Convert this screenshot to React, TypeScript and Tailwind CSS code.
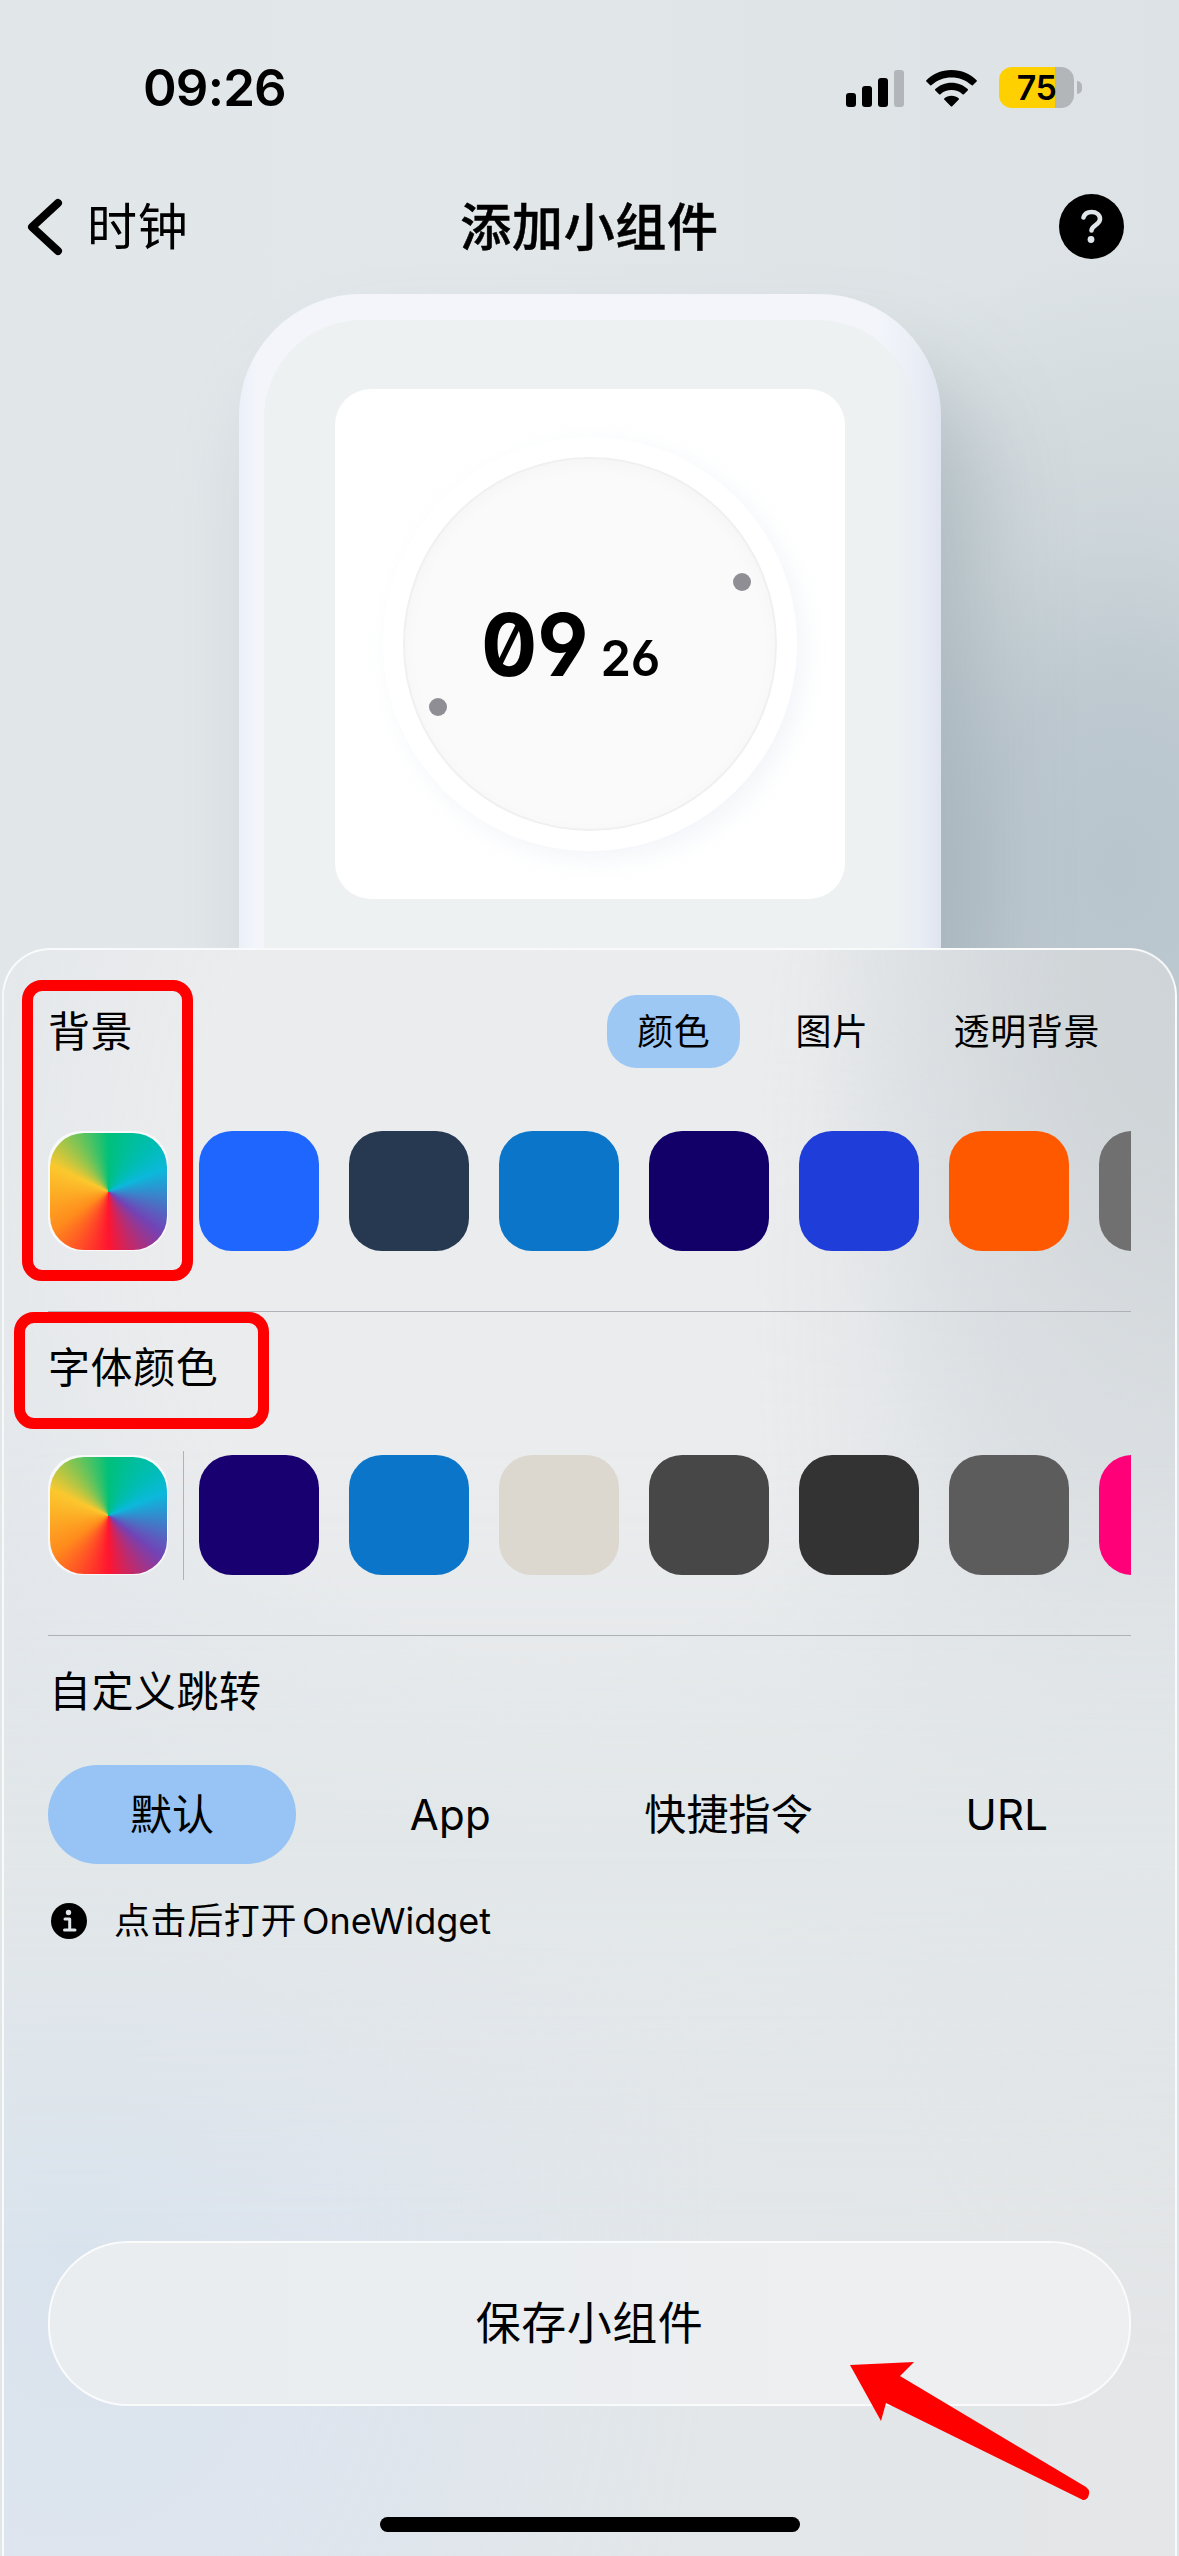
import type { ReactNode } from 'react';

const BACKGROUND_COLORS = ['#1f66ff', '#263951', '#0b76c9', '#120068', '#1f3dd9', '#ff5900', '#707070'];
const FONT_COLORS = ['#190070', '#0b76c9', '#dcd7cf', '#474747', '#333333', '#5c5c5c', '#ff0078'];

function StatusBar() {
  return (
    <div className="flex h-[178px] items-start justify-between pl-[143px] pr-[97px] pt-[67px]">
      <div className="text-[51px] font-semibold leading-[42px] tracking-[-0.8px]">09:26</div>
      <div className="flex items-center">
        <svg className="mt-[1px] h-[37px] w-[58px]" viewBox="0 0 58 37">
          <rect x="0" y="23" width="10" height="14" rx="3" />
          <rect x="16" y="16" width="10" height="21" rx="3" />
          <rect x="32" y="8" width="10" height="29" rx="3" />
          <rect x="48" y="0" width="10" height="37" rx="3" fill="#b2b6b8" />
        </svg>
        <svg className="ml-[22px] mt-[1px] h-[37px] w-[51px]" viewBox="0 0 51 37">
          <path d="M25.500 0C35.500 0 44.500 3.800 50.600 10.200Q51.200 10.900 50.600 11.500L46.800 15.200Q46.100 15.800 45.400 15.100C40 10 33 7.400 25.500 7.400S11 10 5.600 15.100Q4.900 15.800 4.200 15.200L.4 11.500Q-.2 10.900 .4 10.200C6.500 3.800 15.500 0 25.500 0Z" />
          <path d="M25.500 12.800C31.800 12.800 37.400 15.100 41.700 19.100Q42.400 19.800 41.700 20.500L37.900 24.200Q37.200 24.800 36.500 24.200C33.500 21.600 29.700 20.100 25.500 20.100S17.500 21.600 14.500 24.200Q13.800 24.800 13.100 24.200L9.300 20.500Q8.600 19.800 9.300 19.100C13.600 15.100 19.200 12.800 25.500 12.800Z" />
          <path d="M25.500 25.700C28.300 25.700 30.900 26.700 32.800 28.400Q33.400 29 32.800 29.600L26.200 36.200Q25.500 36.800 24.800 36.200L18.200 29.600Q17.600 29 18.200 28.400C20.100 26.700 22.700 25.700 25.500 25.700Z" />
        </svg>
        <div className="ml-[22px] flex h-[41px] w-[75px] items-center justify-center overflow-hidden rounded-[13px] bg-[linear-gradient(to_right,#ffd000_56px,#b2b6b8_56px)] pt-[1px] text-[34px] font-semibold leading-none tracking-[-0.6px]">
          75
        </div>
        <div className="ml-[3px] h-[13px] w-[5px] rounded-r-full bg-[#b2b6b8]" />
      </div>
    </div>
  );
}

function NavBar() {
  return (
    <div className="grid h-[97px] grid-cols-[1fr_auto_1fr] items-center pl-[27px] pr-[55px]">
      <div className="flex items-center">
        <svg className="h-[58px] w-[36px]" viewBox="0 0 36 58" fill="none" stroke="black" strokeWidth="8" strokeLinecap="round" strokeLinejoin="round">
          <path d="M31 5L5 29L31 53" />
        </svg>
        <span className="ml-[24px] text-[50px] leading-none tracking-[0.7px]">时钟</span>
      </div>
      <h1 className="ml-[28px] mt-[2px] text-[51px] font-medium leading-none tracking-[0.7px] [-webkit-text-stroke:0.5px_black]">添加小组件</h1>
      <div className="flex justify-end">
        <svg className="h-[65px] w-[65px]" viewBox="0 0 65 65">
          <circle cx="32.500" cy="32.500" r="32.500" />
          <path d="M24.500 23.500C25.500 19.800 28.500 18 32.500 18C37.500 18 41 20.800 41 25C41 31 32.500 31 32.500 36.500" fill="none" stroke="#dfe5e8" strokeWidth="4.600" strokeLinecap="round" />
          <circle cx="32" cy="45.500" r="3.400" fill="#dfe5e8" />
        </svg>
      </div>
    </div>
  );
}

function ClockPreview() {
  return (
    <div className="mx-auto mt-[19px] h-[760px] w-[702px] rounded-t-[122px] bg-[linear-gradient(to_right,#ebeff8_0,#f3f5fb_16px,#f3f5fb_640px,#e9edf5_680px,#dfe4f0_702px)] px-[25px] pt-[26px] shadow-[36px_70px_90px_rgba(110,130,142,0.36)]">
      <div className="h-full rounded-t-[98px] bg-[linear-gradient(to_right,#edf1f2_0,#edf1f2_628px,#e9eef4_652px)] px-[71px] pt-[69px]">
        <div className="flex h-[510px] w-[510px] items-center justify-center rounded-[36px] bg-white">
          <div className="flex h-[414px] w-[414px] items-center justify-center rounded-full bg-white shadow-[8px_8px_24px_rgba(190,205,225,0.2)]">
            <div className="relative h-[374px] w-[374px] rounded-full border-2 border-[#f0f0f1] bg-[#fafafa] shadow-[inset_0_4px_18px_rgba(0,0,0,0.025)]">
              <div className="flex h-full items-baseline pl-[76px] pt-[142px] [font-feature-settings:'zero','cv03','cv04']">
                <span className="inline-block w-[114px] origin-left scale-x-[0.96] text-[87px] font-bold leading-none">09</span>
                <span className="ml-[6px] text-[49px] font-semibold leading-none tracking-[-0.2px]">26</span>
              </div>
              <i className="absolute left-[328px] top-[114px] h-[18px] w-[18px] rounded-full bg-[#8f8e94]" />
              <i className="absolute left-[24px] top-[239px] h-[18px] w-[18px] rounded-full bg-[#8f8e94]" />
            </div>
          </div>
        </div>
      </div>
    </div>
  );
}

function Rainbow() {
  return (
    <div className="mr-[1px] h-[120px] w-[120px] shrink-0 rounded-[33px] bg-white/70 p-[1.5px]">
      <div className="h-full w-full rounded-[34px] bg-[conic-gradient(#00c07a_0deg,#00bdb5_45deg,#0cb8dc_68deg,#7243b5_128deg,#ff1530_180deg,#ff8c1c_236deg,#fbc82e_295deg,#00c07a_360deg)]" />
    </div>
  );
}

function SwatchRow({ colors, divided }: { colors: string[]; divided?: boolean }) {
  return (
    <div className="relative flex h-[120px] gap-[30px] overflow-x-clip">
      <Rainbow />
      {colors.map((c) => (
        <div key={c} className="h-[120px] w-[120px] shrink-0 rounded-[33px]" style={{ backgroundColor: c }} />
      ))}
      {divided && <i className="absolute left-[135px] top-[-4px] h-[129px] w-px bg-[#afb3b6]" />}
    </div>
  );
}

function Tab({ children, active }: { children: ReactNode; active?: boolean }) {
  return (
    <div className={`flex h-[73px] items-center rounded-[30px] px-[30px] text-[36px] leading-none tracking-[0.6px] ${active ? 'bg-[#9ec8f4]' : ''}`}>
      {children}
    </div>
  );
}

function JumpOption({ children, active }: { children: ReactNode; active?: boolean }) {
  return (
    <div className={`flex h-[99px] items-center justify-center rounded-[50px] text-[42px] leading-none tracking-[0.2px] ${active ? 'bg-[#97c4f4]' : ''}`}>
      {children}
    </div>
  );
}

function SettingsPanel() {
  return (
    <div className="absolute inset-x-[2px] bottom-0 top-[948px] flex flex-col rounded-t-[48px] border-x-2 border-t-2 border-white/80 bg-[linear-gradient(to_bottom,#e2e7e900_0,#e2e7e900_500px,#e2e7e9_900px,#e2e7e900_1300px),linear-gradient(to_bottom,#dfe3e600_100px,#dfe3e600_160px,#e2e5e800_500px),radial-gradient(ellipse_370px_720px_at_100%_0%,#cfd4d8_0,#d1d6d9_30%,#d5dadd99_62%,#dde1e400_100%),radial-gradient(ellipse_420px_1100px_at_100%_20%,#dce1e4_0,#dee2e5_40%,#e2e5e700_100%),radial-gradient(ellipse_720px_900px_at_46%_16%,#ebecee_0,#ebecee_50%,#ebecee00_100%),radial-gradient(ellipse_640px_900px_at_6%_80%,#d9e3ed_0,#dee5ee_40%,#dee5ee00_100%),linear-gradient(to_right,#e0e5e9,#e2e7e9_50%,#e4e6e8)] px-[44px] pt-[45px]">
      <div className="flex items-center justify-between">
        <h2 className="text-[42px] leading-none tracking-[0.5px]">背景</h2>
        <div className="mr-[1px] flex gap-[25px]">
          <Tab active>颜色</Tab>
          <Tab>图片</Tab>
          <Tab>透明背景</Tab>
        </div>
      </div>
      <div className="mt-[63px]">
        <SwatchRow colors={BACKGROUND_COLORS} />
      </div>
      <div className="mt-[60px] h-px bg-[#aeb1b5]" />
      <h2 className="mt-[35px] text-[42px] leading-[42px] tracking-[0.6px]">字体颜色</h2>
      <div className="mt-[66px]">
        <SwatchRow colors={FONT_COLORS} divided />
      </div>
      <div className="mt-[60px] h-px bg-[#aeb1b5]" />
      <h2 className="ml-[1px] mt-[35px] text-[42px] leading-[42px] tracking-[0.5px]">自定义跳转</h2>
      <div className="mt-[52px] grid grid-cols-4 gap-[30px]">
        <JumpOption active>默认</JumpOption>
        <JumpOption>App</JumpOption>
        <JumpOption>快捷指令</JumpOption>
        <JumpOption>URL</JumpOption>
      </div>
      <div className="mt-[36px] flex h-[42px] items-center pl-[3px]">
        <svg className="h-[36px] w-[36px]" viewBox="0 0 36 36">
          <circle cx="18" cy="18" r="18" />
          <circle cx="17.500" cy="9.500" r="2.700" fill="#e0e6ea" />
          <path d="M14 16H18.700V26.500M13.500 27H24" fill="none" stroke="#e0e6ea" strokeWidth="3" strokeLinecap="round" strokeLinejoin="round" />
        </svg>
        <span className="ml-[27px] text-[36px] leading-none tracking-[0.6px]">点击后打开</span>
        <span className="ml-[5px] text-[36px] leading-none">OneWidget</span>
      </div>
      <button className="mb-[111px] mt-auto flex h-[165px] items-center justify-center rounded-[80px] border-2 border-white/75 bg-[linear-gradient(to_right,#e9edf0,#eeeff1)] text-[45px] leading-none tracking-[0.5px]">
        保存小组件
      </button>
      <div className="mb-[24px] h-[15px] w-[420px] self-center rounded-full bg-black" />
    </div>
  );
}

function Annotations() {
  return (
    <>
      <div className="absolute left-[22px] top-[980px] h-[301px] w-[171px] rounded-[20px] border-[11px] border-[#ff0000]" />
      <div className="absolute left-[14px] top-[1312px] h-[117px] w-[255px] rounded-[20px] border-[11px] border-[#ff0000]" />
      <svg className="absolute left-[845px] top-[2355px] h-[150px] w-[250px]" viewBox="845 2355 250 150">
        <path d="M850 2365L914 2362L900 2376L1086 2487Q1090 2490 1089 2494Q1088 2500 1083 2500L886 2403L881 2421Z" fill="#ff0000" />
      </svg>
    </>
  );
}

export default function App() {
  return (
    <div className="relative h-[2556px] w-[1179px] overflow-hidden bg-[radial-gradient(ellipse_460px_620px_at_1120px_870px,#b8c5cd_0,#bec9d0_30%,#c6d0d5aa_55%,#d3dade00_100%),linear-gradient(to_right,#e1e6e9,#e2e7e9_40%,#dce2e5)] font-['Inter','Noto_Sans_CJK_SC',sans-serif] text-black">
      <StatusBar />
      <NavBar />
      <ClockPreview />
      <SettingsPanel />
      <Annotations />
    </div>
  );
}
